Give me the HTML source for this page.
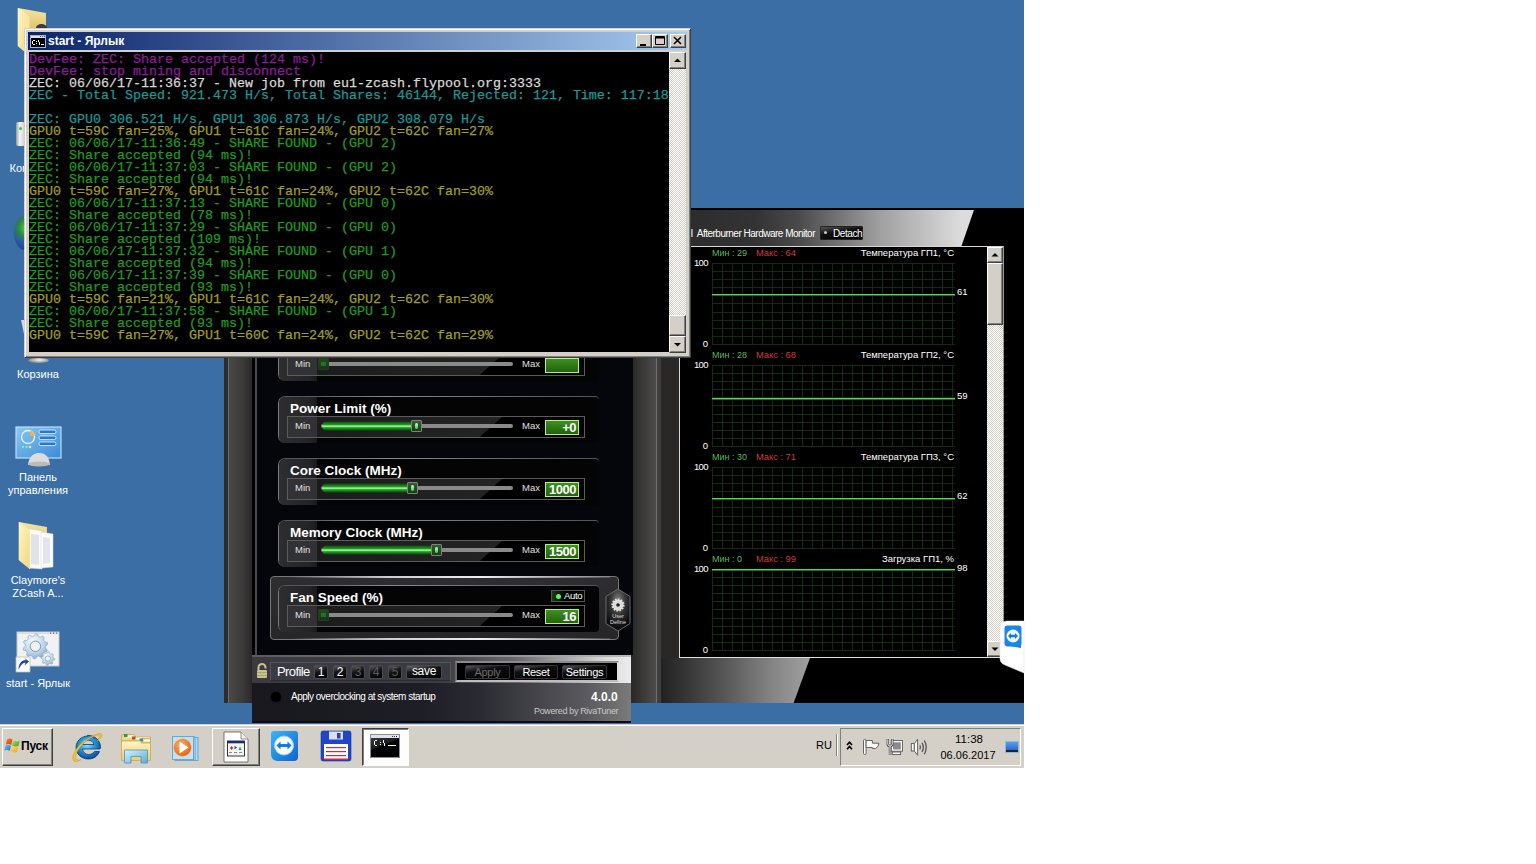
<!DOCTYPE html><html><head><meta charset="utf-8"><style>
*{margin:0;padding:0;box-sizing:border-box}
html,body{width:1536px;height:864px;overflow:hidden;background:#fff}
body{position:relative;font-family:"Liberation Sans",sans-serif}
.abs{position:absolute}
.t{white-space:nowrap}
svg{position:absolute;overflow:visible}
#desk{position:absolute;left:0;top:0;width:1024px;height:724px;background:#3a6ea5;overflow:hidden}
.lbl{position:absolute;color:#fff;font-size:11px;line-height:13px;text-align:center;width:76px}
.con{position:absolute;left:29px;top:52px;width:640px;height:300px;background:#000;overflow:hidden}
.con pre{font-family:"Liberation Mono",monospace;font-size:13.33px;line-height:12px;font-weight:normal;white-space:pre;-webkit-text-stroke:0.25px currentColor;position:absolute;left:0;top:2px}
.m{color:#8c1c9c}.w{color:#d8d8d8}.c{color:#1c9898}.y{color:#a09c28}.g{color:#209a20}
.raised{border:1px solid;border-color:#fff #404040 #404040 #fff;box-shadow:inset -1px -1px #808080,inset 1px 1px #d4d0c8;background:#d4d0c8}
.chk{background:repeating-conic-gradient(#fff 0 25%,#d4d0c8 0 50%) 0 0/2px 2px}
</style></head><body>
<div id="desk"></div>
<svg width="34" height="48" style="left:18px;top:8px">
<defs><linearGradient id="fy1" x1="0" y1="0" x2="1" y2="1"><stop offset="0" stop-color="#fff6c4"/><stop offset="1" stop-color="#f2d680"/></linearGradient>
<linearGradient id="fb1" x1="0" y1="0" x2="0" y2="1"><stop offset="0" stop-color="#f6e4a0"/><stop offset="1" stop-color="#dcbc60"/></linearGradient></defs>
<path d="M0 0 L28 5 L28 26 L0 26Z" fill="url(#fb1)"/>

<path d="M0 0 L11 9 L11 47 L0 38Z" fill="url(#fy1)" stroke="#fff6cc" stroke-width="0.6"/></svg>
<div class="abs" style="left:36px;top:24px;width:11px;height:8px;border-radius:50%;background:#3a3a3a"></div>
<div class="abs" style="left:16px;top:122px;width:9px;height:24px;background:linear-gradient(90deg,#999,#f4f4f4 40%,#ccc);border-radius:2px"></div>
<div class="abs" style="left:19px;top:127px;width:3px;height:3px;background:#3c3;border-radius:50%"></div>
<div class="abs" style="left:14px;top:216px;width:22px;height:34px;border-radius:50%;background:radial-gradient(circle at 60% 35%,#5fd05f,#2a8a3a 35%,#2a5aa8 60%,#1a3a80)"></div>
<div class="abs" style="left:21px;top:320px;width:6px;height:14px;background:linear-gradient(90deg,#c8ccd8,#eef0f4);clip-path:polygon(0 0,100% 0,100% 100%,50% 100%)"></div>
<div class="abs" style="left:28px;top:358px;width:21px;height:5px;border-radius:50%;background:radial-gradient(ellipse at 55% 40%,#f4f4f4,#9a9a9a 60%,#555)"></div>
<svg width="48" height="42" style="left:15px;top:425px"><defs><linearGradient id="cpg" x1="0" y1="0" x2="1" y2="1"><stop offset="0" stop-color="#8cc8f0"/><stop offset="1" stop-color="#3a8ad8"/></linearGradient></defs>
<rect x="1" y="2" width="45" height="31" fill="url(#cpg)" stroke="#b8e0ff" stroke-width="1.2"/>
<circle cx="13" cy="12" r="6.5" fill="none" stroke="#e8f6ff" stroke-width="1.3"/><path d="M15 5.5 A6.5 6.5 0 0 1 19.5 11 L15 11Z" fill="#f7b040"/>
<rect x="24" y="5" width="17" height="3.6" rx="1.8" fill="#2a78c8" stroke="#e8f6ff" stroke-width="0.8"/>
<rect x="24" y="11" width="17" height="3.6" rx="1.8" fill="#2a78c8" stroke="#e8f6ff" stroke-width="0.8"/>
<rect x="24" y="17" width="17" height="3.6" rx="1.8" fill="#2a78c8" stroke="#e8f6ff" stroke-width="0.8"/>
<circle cx="8" cy="22" r="1.2" fill="#6ef"/><circle cx="11.5" cy="22" r="1.2" fill="#6ef"/><circle cx="15" cy="22" r="1.3" fill="#fd6"/>
<path d="M13 40 C14 30 20 28 24 28 C30 28 34 31 35 40 Z" fill="#ddd"/><ellipse cx="24" cy="39" rx="11" ry="2.6" fill="#bbb"/></svg>
<svg width="34" height="48" style="left:19px;top:522px">
<defs><linearGradient id="fy2" x1="0" y1="0" x2="1" y2="1"><stop offset="0" stop-color="#fff6c4"/><stop offset="1" stop-color="#f2d680"/></linearGradient>
<linearGradient id="fb2" x1="0" y1="0" x2="0" y2="1"><stop offset="0" stop-color="#f6e4a0"/><stop offset="1" stop-color="#dcbc60"/></linearGradient></defs>
<path d="M0 0 L28 5 L28 26 L0 26Z" fill="url(#fb2)"/>
<path d="M10 7 L23 9 L23 47 L10 46Z" fill="#fafafa" stroke="#ddd" stroke-width="0.5"/><path d="M12 12 L20 13 L20 43 L12 42Z" fill="#e2e2ea"/><path d="M22 10 L34 12 L34 45 L22 46Z" fill="#fdfdfd" stroke="#ddd" stroke-width="0.5"/><path d="M24 15 L31 16 L31 41 L24 42Z" fill="#e4e4ec"/>
<path d="M0 0 L11 9 L11 47 L0 38Z" fill="url(#fy2)" stroke="#fff6cc" stroke-width="0.6"/></svg>
<svg width="46" height="42" style="left:16px;top:631px"><defs><radialGradient id="gear" cx="0.4" cy="0.3" r="0.8"><stop offset="0" stop-color="#f4fbff"/><stop offset="0.6" stop-color="#b8d4ec"/><stop offset="1" stop-color="#7f9fbf"/></radialGradient></defs>
<rect x="1" y="1" width="42" height="34" fill="#f2f2f2" stroke="#c8c8c8"/><rect x="1" y="1" width="42" height="2" fill="#ddd"/><rect x="34" y="1.5" width="1.2" height="1.2" fill="#666"/><rect x="37" y="1.5" width="1.2" height="1.2" fill="#666"/><rect x="40" y="1.5" width="1.2" height="1.2" fill="#666"/>
<path d="M19.4 2.8 L21.4 3.0 L22.6 5.6 L24.0 6.2 L26.7 5.2 L28.2 6.5 L27.7 9.3 L28.5 10.7 L31.3 11.4 L31.7 13.3 L29.6 15.3 L29.5 16.9 L31.3 19.2 L30.5 21.0 L27.7 21.3 L26.6 22.5 L26.7 25.4 L25.1 26.4 L22.6 25.0 L21.0 25.4 L19.4 27.8 L17.4 27.6 L16.2 25.0 L14.8 24.4 L12.1 25.4 L10.6 24.1 L11.1 21.3 L10.3 19.9 L7.5 19.2 L7.1 17.3 L9.2 15.3 L9.3 13.7 L7.5 11.4 L8.3 9.6 L11.1 9.3 L12.2 8.1 L12.1 5.2 L13.7 4.2 L16.2 5.6 L17.8 5.2Z" fill="url(#gear)" stroke="#8aa0b8" stroke-width="0.6"/><circle cx="19.4" cy="15.3" r="5.2" fill="#f2f2f2" stroke="#7a8a9a" stroke-width="0.9"/>
<path d="M31.9 20.7 L33.2 20.8 L33.9 22.6 L34.8 23.1 L36.7 22.7 L37.6 23.7 L36.8 25.5 L37.1 26.5 L38.7 27.5 L38.6 28.8 L36.8 29.5 L36.3 30.4 L36.7 32.3 L35.7 33.2 L33.9 32.4 L32.9 32.7 L31.9 34.3 L30.6 34.2 L29.9 32.4 L29.0 31.9 L27.1 32.3 L26.2 31.3 L27.0 29.5 L26.7 28.5 L25.1 27.5 L25.2 26.2 L27.0 25.5 L27.5 24.6 L27.1 22.7 L28.1 21.8 L29.9 22.6 L30.9 22.3Z" fill="url(#gear)" stroke="#8aa0b8" stroke-width="0.5"/><circle cx="31.9" cy="27.5" r="2.6" fill="#f2f2f2" stroke="#7a8a9a" stroke-width="0.6"/>
<rect x="0" y="26" width="14" height="15" fill="#fff" stroke="#bbb" stroke-width="0.8"/><path d="M2.5 39 C2.5 32 6 29 10 29 L8.5 27 L13 30.5 L8.5 34.5 L9.5 31.8 C6.5 31.8 4.5 34.5 2.5 39Z" fill="#1a4aa0"/></svg>
<div class="lbl" style="left:0;top:162px">Компьютер</div>
<div class="lbl" style="left:0;top:368px">Корзина</div>
<div class="lbl" style="left:0;top:471px">Панель<br>управления</div>
<div class="lbl" style="left:0;top:574px">Claymore's<br>ZCash A...</div>
<div class="lbl" style="left:0;top:677px">start - Ярлык</div>
<div class="abs" style="left:224px;top:250px;width:437px;height:453px;background:#2a2a2a"></div>
<div class="abs" style="left:224px;top:250px;width:4px;height:453px;background:#2e2d2d"></div>
<div class="abs" style="left:228px;top:250px;width:2px;height:453px;background:#6a6868"></div>
<div class="abs" style="left:229px;top:250px;width:23px;height:453px;background:linear-gradient(90deg,#4a4848,#3c3a38 60%,#2a2928)"></div>
<div class="abs" style="left:633px;top:250px;width:24px;height:453px;background:linear-gradient(90deg,#2a2a2a,#383735 35%,#4f4d4f)"></div>
<div class="abs" style="left:656px;top:250px;width:1px;height:453px;background:#707070"></div>
<div class="abs" style="left:657px;top:250px;width:4px;height:453px;background:#3f3d3f"></div>
<div class="abs" style="left:252px;top:250px;width:381px;height:405px;background:#05050c"></div>
<div class="abs" style="left:252px;top:250px;width:3px;height:405px;background:#000"></div>
<div class="abs" style="left:255px;top:250px;width:2px;height:405px;background:#4a4a4e"></div>
<div class="abs" style="left:278px;top:334px;width:321px;height:47px;border-radius:7px 4px 4px 7px;background:#040404;border-left:1px solid #7a7a7a;border-top:1px solid #555"></div>
<div class="abs" style="left:279px;top:335px;width:38px;height:46px;border-radius:6px 0 0 6px;background:linear-gradient(90deg,#2e2e30,#242426 80%,#1a1a1c)"></div>
<div class="abs" style="left:300px;top:334px;width:290px;height:1px;background:linear-gradient(90deg,rgba(120,120,120,0),#8a8a8a 30%,#6a6a6a 70%,rgba(90,90,90,0))"></div>
<div class="abs t" style="left:290px;top:338px;font-size:13.5px;font-weight:bold;color:#fff;line-height:17px">Core Voltage (mV)</div>
<div class="abs" style="left:287px;top:354px;width:298px;height:22px;border:1px solid #5c5c5c;background:#000;overflow:hidden"><div class="abs" style="left:0;top:0;width:29px;height:20px;background:#323234"></div><div class="abs" style="left:29px;top:0;width:185px;height:20px;background:linear-gradient(90deg,#1c1c1c,#242424);clip-path:polygon(0 0,100% 0,88% 100%,0 100%)"></div></div>
<div class="abs t" style="left:295px;top:358px;font-size:9.5px;color:#e0e0e0;line-height:12px">Min</div>
<div class="abs t" style="left:522px;top:358px;font-size:9.5px;color:#e0e0e0;line-height:12px">Max</div>
<div class="abs" style="left:321px;top:362px;width:192px;height:4px;border-radius:2px;background:#8a8a8a"></div>
<div class="abs" style="left:318px;top:358px;width:11px;height:12px;background:linear-gradient(#1e4a1e,#123a12);border:1px solid #2a3a2a;border-radius:1px"><div class="abs" style="left:2px;top:3px;width:5px;height:4px;background:#3a7a3a;opacity:.7"></div></div>
<div class="abs" style="left:545px;top:358px;width:34px;height:15px;border:1px solid #b6f08a;background:linear-gradient(#3e9020,#23620e);color:#fff;font-weight:bold;font-size:13px;line-height:13px;text-align:right;padding-right:2px;letter-spacing:-0.5px"></div>
<div class="abs" style="left:278px;top:396px;width:321px;height:47px;border-radius:7px 4px 4px 7px;background:#040404;border-left:1px solid #7a7a7a;border-top:1px solid #555"></div>
<div class="abs" style="left:279px;top:397px;width:38px;height:46px;border-radius:6px 0 0 6px;background:linear-gradient(90deg,#2e2e30,#242426 80%,#1a1a1c)"></div>
<div class="abs" style="left:300px;top:396px;width:290px;height:1px;background:linear-gradient(90deg,rgba(120,120,120,0),#8a8a8a 30%,#6a6a6a 70%,rgba(90,90,90,0))"></div>
<div class="abs t" style="left:290px;top:400px;font-size:13.5px;font-weight:bold;color:#fff;line-height:17px">Power Limit (%)</div>
<div class="abs" style="left:287px;top:416px;width:298px;height:22px;border:1px solid #5c5c5c;background:#000;overflow:hidden"><div class="abs" style="left:0;top:0;width:29px;height:20px;background:#323234"></div><div class="abs" style="left:29px;top:0;width:185px;height:20px;background:linear-gradient(90deg,#1c1c1c,#242424);clip-path:polygon(0 0,100% 0,88% 100%,0 100%)"></div></div>
<div class="abs t" style="left:295px;top:420px;font-size:9.5px;color:#e0e0e0;line-height:12px">Min</div>
<div class="abs t" style="left:522px;top:420px;font-size:9.5px;color:#e0e0e0;line-height:12px">Max</div>
<div class="abs" style="left:321px;top:424px;width:192px;height:4px;border-radius:2px;background:#8a8a8a"></div>
<div class="abs" style="left:322px;top:421px;width:93px;height:10px;border-radius:5px;background:linear-gradient(rgba(20,90,20,0),#157015 20%,#22a022 38%,#8af08a 48%,#b8ffb0 52%,#30b030 64%,#127012 82%,rgba(20,90,20,0))"></div>
<div class="abs" style="left:411px;top:420px;width:11px;height:12px;background:linear-gradient(#3a5a3a,#1a3a1a);border:1px solid #7a847a;border-radius:1px"><div class="abs" style="left:3px;top:2px;width:3px;height:6px;border-radius:2px;background:linear-gradient(#cfc,#3c3)"></div></div>
<div class="abs" style="left:545px;top:420px;width:34px;height:15px;border:1px solid #b6f08a;background:linear-gradient(#3e9020,#23620e);color:#fff;font-weight:bold;font-size:13px;line-height:13px;text-align:right;padding-right:2px;letter-spacing:-0.5px">+0</div>
<div class="abs" style="left:278px;top:458px;width:321px;height:47px;border-radius:7px 4px 4px 7px;background:#040404;border-left:1px solid #7a7a7a;border-top:1px solid #555"></div>
<div class="abs" style="left:279px;top:459px;width:38px;height:46px;border-radius:6px 0 0 6px;background:linear-gradient(90deg,#2e2e30,#242426 80%,#1a1a1c)"></div>
<div class="abs" style="left:300px;top:458px;width:290px;height:1px;background:linear-gradient(90deg,rgba(120,120,120,0),#8a8a8a 30%,#6a6a6a 70%,rgba(90,90,90,0))"></div>
<div class="abs t" style="left:290px;top:462px;font-size:13.5px;font-weight:bold;color:#fff;line-height:17px">Core Clock (MHz)</div>
<div class="abs" style="left:287px;top:478px;width:298px;height:22px;border:1px solid #5c5c5c;background:#000;overflow:hidden"><div class="abs" style="left:0;top:0;width:29px;height:20px;background:#323234"></div><div class="abs" style="left:29px;top:0;width:185px;height:20px;background:linear-gradient(90deg,#1c1c1c,#242424);clip-path:polygon(0 0,100% 0,88% 100%,0 100%)"></div></div>
<div class="abs t" style="left:295px;top:482px;font-size:9.5px;color:#e0e0e0;line-height:12px">Min</div>
<div class="abs t" style="left:522px;top:482px;font-size:9.5px;color:#e0e0e0;line-height:12px">Max</div>
<div class="abs" style="left:321px;top:486px;width:192px;height:4px;border-radius:2px;background:#8a8a8a"></div>
<div class="abs" style="left:322px;top:483px;width:89px;height:10px;border-radius:5px;background:linear-gradient(rgba(20,90,20,0),#157015 20%,#22a022 38%,#8af08a 48%,#b8ffb0 52%,#30b030 64%,#127012 82%,rgba(20,90,20,0))"></div>
<div class="abs" style="left:407px;top:482px;width:11px;height:12px;background:linear-gradient(#3a5a3a,#1a3a1a);border:1px solid #7a847a;border-radius:1px"><div class="abs" style="left:3px;top:2px;width:3px;height:6px;border-radius:2px;background:linear-gradient(#cfc,#3c3)"></div></div>
<div class="abs" style="left:545px;top:482px;width:34px;height:15px;border:1px solid #b6f08a;background:linear-gradient(#3e9020,#23620e);color:#fff;font-weight:bold;font-size:13px;line-height:13px;text-align:right;padding-right:2px;letter-spacing:-0.5px">1000</div>
<div class="abs" style="left:278px;top:520px;width:321px;height:47px;border-radius:7px 4px 4px 7px;background:#040404;border-left:1px solid #7a7a7a;border-top:1px solid #555"></div>
<div class="abs" style="left:279px;top:521px;width:38px;height:46px;border-radius:6px 0 0 6px;background:linear-gradient(90deg,#2e2e30,#242426 80%,#1a1a1c)"></div>
<div class="abs" style="left:300px;top:520px;width:290px;height:1px;background:linear-gradient(90deg,rgba(120,120,120,0),#8a8a8a 30%,#6a6a6a 70%,rgba(90,90,90,0))"></div>
<div class="abs t" style="left:290px;top:524px;font-size:13.5px;font-weight:bold;color:#fff;line-height:17px">Memory Clock (MHz)</div>
<div class="abs" style="left:287px;top:540px;width:298px;height:22px;border:1px solid #5c5c5c;background:#000;overflow:hidden"><div class="abs" style="left:0;top:0;width:29px;height:20px;background:#323234"></div><div class="abs" style="left:29px;top:0;width:185px;height:20px;background:linear-gradient(90deg,#1c1c1c,#242424);clip-path:polygon(0 0,100% 0,88% 100%,0 100%)"></div></div>
<div class="abs t" style="left:295px;top:544px;font-size:9.5px;color:#e0e0e0;line-height:12px">Min</div>
<div class="abs t" style="left:522px;top:544px;font-size:9.5px;color:#e0e0e0;line-height:12px">Max</div>
<div class="abs" style="left:321px;top:548px;width:192px;height:4px;border-radius:2px;background:#8a8a8a"></div>
<div class="abs" style="left:322px;top:545px;width:113px;height:10px;border-radius:5px;background:linear-gradient(rgba(20,90,20,0),#157015 20%,#22a022 38%,#8af08a 48%,#b8ffb0 52%,#30b030 64%,#127012 82%,rgba(20,90,20,0))"></div>
<div class="abs" style="left:431px;top:544px;width:11px;height:12px;background:linear-gradient(#3a5a3a,#1a3a1a);border:1px solid #7a847a;border-radius:1px"><div class="abs" style="left:3px;top:2px;width:3px;height:6px;border-radius:2px;background:linear-gradient(#cfc,#3c3)"></div></div>
<div class="abs" style="left:545px;top:544px;width:34px;height:15px;border:1px solid #b6f08a;background:linear-gradient(#3e9020,#23620e);color:#fff;font-weight:bold;font-size:13px;line-height:13px;text-align:right;padding-right:2px;letter-spacing:-0.5px">1500</div>
<div class="abs" style="left:270px;top:576px;width:349px;height:64px;border-radius:4px;border:1px solid #777;background:linear-gradient(#2e2e30,#262628)"></div>
<div class="abs" style="left:290px;top:576px;width:320px;height:2px;background:linear-gradient(90deg,rgba(200,200,200,0),#ccc 30%,#eee 60%,rgba(200,200,200,.2))"></div>
<div class="abs" style="left:290px;top:638px;width:320px;height:2px;background:linear-gradient(90deg,rgba(200,200,200,0),#ccc 30%,#eee 60%,rgba(200,200,200,.2))"></div>
<div class="abs" style="left:278px;top:585px;width:321px;height:47px;border-radius:7px 4px 4px 7px;background:#040404;border-left:1px solid #7a7a7a;border-top:1px solid #555"></div>
<div class="abs" style="left:279px;top:586px;width:38px;height:46px;border-radius:6px 0 0 6px;background:linear-gradient(90deg,#2e2e30,#242426 80%,#1a1a1c)"></div>
<div class="abs" style="left:300px;top:585px;width:290px;height:1px;background:linear-gradient(90deg,rgba(120,120,120,0),#8a8a8a 30%,#6a6a6a 70%,rgba(90,90,90,0))"></div>
<div class="abs t" style="left:290px;top:589px;font-size:13.5px;font-weight:bold;color:#fff;line-height:17px">Fan Speed (%)</div>
<div class="abs" style="left:287px;top:605px;width:298px;height:22px;border:1px solid #5c5c5c;background:#000;overflow:hidden"><div class="abs" style="left:0;top:0;width:29px;height:20px;background:#323234"></div><div class="abs" style="left:29px;top:0;width:185px;height:20px;background:linear-gradient(90deg,#1c1c1c,#242424);clip-path:polygon(0 0,100% 0,88% 100%,0 100%)"></div></div>
<div class="abs t" style="left:295px;top:609px;font-size:9.5px;color:#e0e0e0;line-height:12px">Min</div>
<div class="abs t" style="left:522px;top:609px;font-size:9.5px;color:#e0e0e0;line-height:12px">Max</div>
<div class="abs" style="left:321px;top:613px;width:192px;height:4px;border-radius:2px;background:#8a8a8a"></div>
<div class="abs" style="left:318px;top:609px;width:11px;height:12px;background:linear-gradient(#1e4a1e,#123a12);border:1px solid #2a3a2a;border-radius:1px"><div class="abs" style="left:2px;top:3px;width:5px;height:4px;background:#3a7a3a;opacity:.7"></div></div>
<div class="abs" style="left:545px;top:609px;width:34px;height:15px;border:1px solid #b6f08a;background:linear-gradient(#3e9020,#23620e);color:#fff;font-weight:bold;font-size:13px;line-height:13px;text-align:right;padding-right:2px;letter-spacing:-0.5px">16</div>
<div class="abs" style="left:551px;top:590px;width:34px;height:12px;border:1px solid #555;background:linear-gradient(90deg,#1a3a1a,#000 40%);color:#fff;font-size:9.5px;line-height:10px;padding-left:12px;letter-spacing:-0.3px">Auto</div>
<div class="abs" style="left:556px;top:594px;width:5px;height:5px;border-radius:50%;background:#5f5"></div>
<svg width="26" height="45" style="left:605px;top:588px"><defs><radialGradient id="hx" cx="0.5" cy="0.3" r="0.65"><stop offset="0" stop-color="#8a8a8a"/><stop offset="0.5" stop-color="#333"/><stop offset="1" stop-color="#0a0a0a"/></radialGradient></defs>
<path d="M13 1 L25 8.5 V35.5 L13 43 L1 35.5 V8.5Z" fill="url(#hx)" stroke="#6a6a6a" stroke-width="1"/>
<circle cx="13" cy="17" r="5.5" fill="#ddd" stroke="#e8e8e8" stroke-width="2.2" stroke-dasharray="1.5 1.3"/><circle cx="13" cy="17" r="1.8" fill="#222"/>
<text x="13" y="30" font-size="5.5" fill="#ddd" text-anchor="middle" font-family="Liberation Sans">User</text><text x="13" y="35.5" font-size="5.5" fill="#ddd" text-anchor="middle" font-family="Liberation Sans">Define</text></svg>
<div class="abs" style="left:252px;top:655px;width:379px;height:68px;background:#1c1c22"></div>
<div class="abs" style="left:252px;top:655px;width:379px;height:2px;background:linear-gradient(90deg,#5a5a5a,#888 60%,#bbb)"></div>
<div class="abs" style="left:252px;top:657px;width:379px;height:27px;background:linear-gradient(90deg,#3a3a40,#3c3c42 50%,#6a6a6e 70%,#d8d8d8 93%,#ececec)"></div>
<div class="abs" style="left:252px;top:683px;width:379px;height:40px;background:linear-gradient(90deg,#18181e,#1e1e26 45%,#2a2a32 60%,#5a5a5e 88%,#7a7a7a)"></div>
<div class="abs" style="left:252px;top:721px;width:379px;height:2px;background:#0a0a10"></div>
<svg width="12" height="16" style="left:256px;top:663px"><path d="M2.5 7 V4.5 A3.5 3.5 0 0 1 9.5 4.5 V5.5" fill="none" stroke="#c8c490" stroke-width="2"/><rect x="1" y="7" width="10" height="8" rx="1" fill="#c8c490"/><rect x="1" y="9" width="10" height="1" fill="#a8a470"/><rect x="1" y="12" width="10" height="1" fill="#a8a470"/></svg>
<div class="abs" style="left:270px;top:662px;width:181px;height:19px;background:#3a3a42;border:1px solid #55555c;border-bottom-color:#2a2a30"></div>
<div class="abs t" style="left:277px;top:664px;font-size:13px;color:#fff;line-height:16px;letter-spacing:-0.6px">Profile</div>
<div class="abs" style="left:314px;top:665px;width:14px;height:14px;background:linear-gradient(160deg,#5a5a5a,#151515 45%,#000);border:1px solid #4a4a4e;border-radius:2px;color:#fff;font-size:12px;line-height:13px;text-align:center">1</div>
<div class="abs" style="left:333px;top:665px;width:14px;height:14px;background:linear-gradient(160deg,#5a5a5a,#151515 45%,#000);border:1px solid #4a4a4e;border-radius:2px;color:#fff;font-size:12px;line-height:13px;text-align:center">2</div>
<div class="abs" style="left:351px;top:665px;width:14px;height:14px;background:linear-gradient(160deg,#5a5a5a,#151515 45%,#000);border:1px solid #4a4a4e;border-radius:2px;color:#5a5a5a;font-size:12px;line-height:13px;text-align:center">3</div>
<div class="abs" style="left:369px;top:665px;width:14px;height:14px;background:linear-gradient(160deg,#5a5a5a,#151515 45%,#000);border:1px solid #4a4a4e;border-radius:2px;color:#5a5a5a;font-size:12px;line-height:13px;text-align:center">4</div>
<div class="abs" style="left:388px;top:665px;width:14px;height:14px;background:linear-gradient(160deg,#5a5a5a,#151515 45%,#000);border:1px solid #4a4a4e;border-radius:2px;color:#5a5a5a;font-size:12px;line-height:13px;text-align:center">5</div>
<div class="abs" style="left:406px;top:665px;width:36px;height:14px;background:linear-gradient(170deg,#6a6a6a,#151515 40%,#000);border:1px solid #4a4a4e;border-radius:2px;color:#fff;font-size:12px;line-height:11px;text-align:center;letter-spacing:-0.3px">save</div>
<div class="abs" style="left:455px;top:661px;width:164px;height:21px;background:#000;border:2px solid;border-color:#8a8a8a #e0e0e0 #bdbdbd #6a6a6a"></div>
<div class="abs" style="left:465px;top:665px;width:45px;height:14px;background:linear-gradient(170deg,#5a5a5a,#101010 35%,#000);border:1px solid #333;border-radius:2px;color:#6a6a6a;font-size:11px;line-height:12px;text-align:center;letter-spacing:-0.3px">Apply</div>
<div class="abs" style="left:514px;top:665px;width:44px;height:14px;background:linear-gradient(170deg,#5a5a5a,#101010 35%,#000);border:1px solid #333;border-radius:2px;color:#fff;font-size:11px;line-height:12px;text-align:center;letter-spacing:-0.3px">Reset</div>
<div class="abs" style="left:562px;top:665px;width:45px;height:14px;background:linear-gradient(170deg,#5a5a5a,#101010 35%,#000);border:1px solid #333;border-radius:2px;color:#fff;font-size:11px;line-height:12px;text-align:center;letter-spacing:-0.3px">Settings</div>
<div class="abs" style="left:271px;top:692px;width:10px;height:10px;border-radius:50%;background:#000;box-shadow:0 0 2px #000"></div>
<div class="abs t" style="left:291px;top:691px;font-size:10px;color:#fff;line-height:12px;letter-spacing:-0.5px">Apply overclocking at system startup</div>
<div class="abs t" style="left:591px;top:690px;font-size:12px;font-weight:bold;color:#fff;line-height:14px;letter-spacing:0px">4.0.0</div>
<div class="abs t" style="left:534px;top:705px;font-size:9px;color:#c8c8c8;line-height:12px;letter-spacing:-0.35px">Powered by RivaTuner</div>
<div class="abs" style="left:661px;top:208px;width:363px;height:495px;background:#000"></div>
<div class="abs" style="left:661px;top:208px;width:18px;height:495px;background:#2a2826"></div>
<div class="abs" style="left:661px;top:210px;width:313px;height:36px;background:linear-gradient(90deg,#2a2a2a,#333 30%,#4a4a4a 44%,#a0a0a0 70%,#dcdcdc 96%);clip-path:polygon(0 0,100% 0,96% 100%,0 100%)"></div>
<div class="abs" style="left:661px;top:658px;width:149px;height:45px;background:linear-gradient(90deg,#222,#333 15%,#5a5a5a 45%,#858585 75%,#a0a0a0);clip-path:polygon(0 0,100% 0,89% 100%,0 100%)"></div>
<div class="abs t" style="left:615px;top:227px;width:200px;font-size:10px;color:#fff;line-height:13px;letter-spacing:-0.5px;text-align:right">I&nbsp; Afterburner Hardware Monitor</div>
<div class="abs" style="left:820px;top:226px;width:43px;height:14px;background:linear-gradient(170deg,#555,#111 40%,#000);border:1px solid #222;border-radius:1px;color:#fff;font-size:10px;line-height:13px;padding-left:12px;letter-spacing:-0.4px">Detach</div>
<div class="abs" style="left:824px;top:231px;width:3px;height:3px;background:#ccc;border-radius:50%"></div>
<div class="abs" style="left:679px;top:246px;width:325px;height:412px;border:1px solid #d8d8d8;border-right-color:#9a9a9a;border-bottom-color:#e0e0e0;background:#000"></div>
<div class="abs t" style="left:712px;top:247px;font-size:9px;line-height:12px;color:#5ab85a">Мин : 29</div>
<div class="abs t" style="left:756px;top:247px;font-size:9.3px;line-height:12px;color:#d23a3a">Макс : 64</div>
<div class="abs t" style="left:754px;top:247px;width:200px;font-size:9.5px;line-height:12px;color:#fff;text-align:right">Температура ГП1, °C</div>
<div class="abs t" style="left:680px;top:257px;width:28px;font-size:9.5px;line-height:12px;color:#fff;text-align:right;letter-spacing:-0.6px">100</div>
<div class="abs t" style="left:680px;top:338px;width:28px;font-size:9.5px;line-height:12px;color:#fff;text-align:right">0</div>
<div class="abs" style="left:712px;top:263px;width:243px;height:83px;"><svg width="244" height="83" style="left:0;top:0"><path d="M0.5 0V81 M10.5 0V81 M20.5 0V81 M30.5 0V81 M40.5 0V81 M50.5 0V81 M60.5 0V81 M70.5 0V81 M80.5 0V81 M90.5 0V81 M100.5 0V81 M110.5 0V81 M120.5 0V81 M130.5 0V81 M140.5 0V81 M150.5 0V81 M160.5 0V81 M170.5 0V81 M180.5 0V81 M190.5 0V81 M200.5 0V81 M210.5 0V81 M220.5 0V81 M230.5 0V81 M240.5 0V81 M0 0.5H243 M0 8.5H243 M0 16.5H243 M0 24.5H243 M0 32.5H243 M0 40.5H243 M0 49.5H243 M0 57.5H243 M0 65.5H243 M0 73.5H243 M0 81.5H243" stroke="#0e2e0e" stroke-width="1" fill="none"/></svg></div>
<div class="abs" style="left:712px;top:294px;width:243px;height:1px;background:#58d858"></div>
<div class="abs" style="left:712px;top:295px;width:243px;height:1px;background:#1e6a1e"></div>
<div class="abs t" style="left:957px;top:286px;font-size:9.5px;line-height:12px;color:#fff">61</div>
<div class="abs t" style="left:712px;top:349px;font-size:9px;line-height:12px;color:#5ab85a">Мин : 28</div>
<div class="abs t" style="left:756px;top:349px;font-size:9.3px;line-height:12px;color:#d23a3a">Макс : 68</div>
<div class="abs t" style="left:754px;top:349px;width:200px;font-size:9.5px;line-height:12px;color:#fff;text-align:right">Температура ГП2, °C</div>
<div class="abs t" style="left:680px;top:359px;width:28px;font-size:9.5px;line-height:12px;color:#fff;text-align:right;letter-spacing:-0.6px">100</div>
<div class="abs t" style="left:680px;top:440px;width:28px;font-size:9.5px;line-height:12px;color:#fff;text-align:right">0</div>
<div class="abs" style="left:712px;top:365px;width:243px;height:83px;"><svg width="244" height="83" style="left:0;top:0"><path d="M0.5 0V81 M10.5 0V81 M20.5 0V81 M30.5 0V81 M40.5 0V81 M50.5 0V81 M60.5 0V81 M70.5 0V81 M80.5 0V81 M90.5 0V81 M100.5 0V81 M110.5 0V81 M120.5 0V81 M130.5 0V81 M140.5 0V81 M150.5 0V81 M160.5 0V81 M170.5 0V81 M180.5 0V81 M190.5 0V81 M200.5 0V81 M210.5 0V81 M220.5 0V81 M230.5 0V81 M240.5 0V81 M0 0.5H243 M0 8.5H243 M0 16.5H243 M0 24.5H243 M0 32.5H243 M0 40.5H243 M0 49.5H243 M0 57.5H243 M0 65.5H243 M0 73.5H243 M0 81.5H243" stroke="#0e2e0e" stroke-width="1" fill="none"/></svg></div>
<div class="abs" style="left:712px;top:398px;width:243px;height:1px;background:#58d858"></div>
<div class="abs" style="left:712px;top:399px;width:243px;height:1px;background:#1e6a1e"></div>
<div class="abs t" style="left:957px;top:390px;font-size:9.5px;line-height:12px;color:#fff">59</div>
<div class="abs t" style="left:712px;top:451px;font-size:9px;line-height:12px;color:#5ab85a">Мин : 30</div>
<div class="abs t" style="left:756px;top:451px;font-size:9.3px;line-height:12px;color:#d23a3a">Макс : 71</div>
<div class="abs t" style="left:754px;top:451px;width:200px;font-size:9.5px;line-height:12px;color:#fff;text-align:right">Температура ГП3, °C</div>
<div class="abs t" style="left:680px;top:461px;width:28px;font-size:9.5px;line-height:12px;color:#fff;text-align:right;letter-spacing:-0.6px">100</div>
<div class="abs t" style="left:680px;top:542px;width:28px;font-size:9.5px;line-height:12px;color:#fff;text-align:right">0</div>
<div class="abs" style="left:712px;top:467px;width:243px;height:83px;"><svg width="244" height="83" style="left:0;top:0"><path d="M0.5 0V81 M10.5 0V81 M20.5 0V81 M30.5 0V81 M40.5 0V81 M50.5 0V81 M60.5 0V81 M70.5 0V81 M80.5 0V81 M90.5 0V81 M100.5 0V81 M110.5 0V81 M120.5 0V81 M130.5 0V81 M140.5 0V81 M150.5 0V81 M160.5 0V81 M170.5 0V81 M180.5 0V81 M190.5 0V81 M200.5 0V81 M210.5 0V81 M220.5 0V81 M230.5 0V81 M240.5 0V81 M0 0.5H243 M0 8.5H243 M0 16.5H243 M0 24.5H243 M0 32.5H243 M0 40.5H243 M0 49.5H243 M0 57.5H243 M0 65.5H243 M0 73.5H243 M0 81.5H243" stroke="#0e2e0e" stroke-width="1" fill="none"/></svg></div>
<div class="abs" style="left:712px;top:498px;width:243px;height:1px;background:#58d858"></div>
<div class="abs" style="left:712px;top:499px;width:243px;height:1px;background:#1e6a1e"></div>
<div class="abs t" style="left:957px;top:490px;font-size:9.5px;line-height:12px;color:#fff">62</div>
<div class="abs t" style="left:712px;top:553px;font-size:9px;line-height:12px;color:#5ab85a">Мин : 0</div>
<div class="abs t" style="left:756px;top:553px;font-size:9.3px;line-height:12px;color:#d23a3a">Макс : 99</div>
<div class="abs t" style="left:754px;top:553px;width:200px;font-size:9.5px;line-height:12px;color:#fff;text-align:right">Загрузка ГП1, %</div>
<div class="abs t" style="left:680px;top:563px;width:28px;font-size:9.5px;line-height:12px;color:#fff;text-align:right;letter-spacing:-0.6px">100</div>
<div class="abs t" style="left:680px;top:644px;width:28px;font-size:9.5px;line-height:12px;color:#fff;text-align:right">0</div>
<div class="abs" style="left:712px;top:569px;width:243px;height:83px;"><svg width="244" height="83" style="left:0;top:0"><path d="M0.5 0V81 M10.5 0V81 M20.5 0V81 M30.5 0V81 M40.5 0V81 M50.5 0V81 M60.5 0V81 M70.5 0V81 M80.5 0V81 M90.5 0V81 M100.5 0V81 M110.5 0V81 M120.5 0V81 M130.5 0V81 M140.5 0V81 M150.5 0V81 M160.5 0V81 M170.5 0V81 M180.5 0V81 M190.5 0V81 M200.5 0V81 M210.5 0V81 M220.5 0V81 M230.5 0V81 M240.5 0V81 M0 0.5H243 M0 8.5H243 M0 16.5H243 M0 24.5H243 M0 32.5H243 M0 40.5H243 M0 49.5H243 M0 57.5H243 M0 65.5H243 M0 73.5H243 M0 81.5H243" stroke="#0e2e0e" stroke-width="1" fill="none"/></svg></div>
<div class="abs" style="left:712px;top:569px;width:243px;height:1px;background:#58d858"></div>
<div class="abs" style="left:712px;top:570px;width:243px;height:1px;background:#1e6a1e"></div>
<div class="abs t" style="left:957px;top:562px;font-size:9.5px;line-height:12px;color:#fff">98</div>
<div class="abs chk" style="left:987px;top:247px;width:16px;height:410px;"></div>
<div class="abs raised" style="left:987px;top:247px;width:16px;height:16px;"><svg width="16" height="16" style="left:-1px;top:-1px"><path d="M4.5 9.5h7l-3.5-3.5z" fill="#000"/></svg></div>
<div class="abs raised" style="left:987px;top:263px;width:16px;height:62px;"></div>
<div class="abs raised" style="left:987px;top:641px;width:16px;height:16px;"><svg width="16" height="16" style="left:-1px;top:-1px"><path d="M4.5 6.5h7l-3.5 3.5z" fill="#000"/></svg></div>
<svg width="26" height="52" style="left:999px;top:621px"><path d="M25 0 H8 Q1 0 1 7 V38 Q1 42 6 44 L25 52Z" fill="#fff" stroke="#dde" stroke-width="0.5"/>
<path d="M6 5 L22 7 V27 L6 24Z" fill="#1a7ae0"/><rect x="5.5" y="4.5" width="17" height="21" rx="3" fill="#1a86e8"/><circle cx="14" cy="15" r="6.5" fill="#eef6ff"/><path d="M9 15 L12 12 V13.8 H16 V12 L19 15 L16 18 V16.2 H12 V18Z" fill="#1a7ad8"/></svg>
<div class="abs" style="left:24px;top:28px;width:667px;height:330px;background:#d4d0c8;border:1px solid;border-color:#d4d0c8 #404040 #404040 #d4d0c8;box-shadow:inset 1px 1px #fff,inset -1px -1px #808080"></div>
<div class="abs" style="left:28px;top:32px;width:659px;height:18px;background:linear-gradient(90deg,#0a246a,#a6caf0)"></div>
<svg width="16" height="13" style="left:30px;top:35px" shape-rendering="crispEdges"><rect x="0" y="0" width="16" height="13" fill="#a8b0cc"/><rect x="1" y="1" width="14" height="2" fill="#dde0ea"/><rect x="10" y="1" width="1" height="1" fill="#556"/><rect x="12" y="1" width="1" height="1" fill="#556"/><rect x="14" y="1" width="1" height="1" fill="#556"/><rect x="1" y="3" width="14" height="9" fill="#000"/>
<g fill="#fff"><rect x="3" y="5" width="2" height="1"/><rect x="2" y="6" width="1" height="3"/><rect x="3" y="9" width="2" height="1"/><rect x="6" y="6" width="1" height="1"/><rect x="6" y="8" width="1" height="1"/><rect x="8" y="5" width="1" height="2"/><rect x="9" y="7" width="1" height="3"/><rect x="11" y="9" width="3" height="1"/></g></svg>
<div class="abs t" style="left:48px;top:34px;font-size:12px;font-weight:bold;color:#fff;line-height:14px">start - Ярлык</div>
<div class="abs chk" style="left:669px;top:52px;width:17px;height:300px;"></div>
<div class="abs raised" style="left:669px;top:52px;width:17px;height:17px;"><svg width="17" height="17" style="left:-1px;top:-1px"><path d="M5 10h7l-3.5-3.5z" fill="#000"/></svg></div>
<div class="abs raised" style="left:669px;top:315px;width:17px;height:21px;"></div>
<div class="abs raised" style="left:669px;top:336px;width:17px;height:17px;"><svg width="17" height="17" style="left:-1px;top:-1px"><path d="M5 7h7l-3.5 3.5z" fill="#000"/></svg></div>
<div class="abs raised" style="left:636px;top:34px;width:16px;height:14px;"><svg width="16" height="14" style="left:-1px;top:-1px"><path d="M4 10h6v2H4z" fill="#000"/></svg></div>
<div class="abs raised" style="left:652px;top:34px;width:16px;height:14px;"><svg width="16" height="14" style="left:-1px;top:-1px"><path d="M3.5 2.5h9v8h-9z M3.5 3.5h9" fill="none" stroke="#000" stroke-width="1"/><path d="M3 3h10v1.5H3z" fill="#000"/></svg></div>
<div class="abs raised" style="left:670px;top:34px;width:16px;height:14px;"><svg width="16" height="14" style="left:-1px;top:-1px"><path d="M4 3l7 7M11 3l-7 7" stroke="#000" stroke-width="1.6"/></svg></div>
<div class="con"><pre><span class="m">DevFee: ZEC: Share accepted (124 ms)!</span>
<span class="m">DevFee: stop mining and disconnect</span>
<span class="w">ZEC: 06/06/17-11:36:37 - New job from eu1-zcash.flypool.org:3333</span>
<span class="c">ZEC - Total Speed: 921.473 H/s, Total Shares: 46144, Rejected: 121, Time: 117:18</span>
<span class="c"></span>
<span class="c">ZEC: GPU0 306.521 H/s, GPU1 306.873 H/s, GPU2 308.079 H/s</span>
<span class="y">GPU0 t=59C fan=25%, GPU1 t=61C fan=24%, GPU2 t=62C fan=27%</span>
<span class="g">ZEC: 06/06/17-11:36:49 - SHARE FOUND - (GPU 2)</span>
<span class="g">ZEC: Share accepted (94 ms)!</span>
<span class="g">ZEC: 06/06/17-11:37:03 - SHARE FOUND - (GPU 2)</span>
<span class="g">ZEC: Share accepted (94 ms)!</span>
<span class="y">GPU0 t=59C fan=27%, GPU1 t=61C fan=24%, GPU2 t=62C fan=30%</span>
<span class="g">ZEC: 06/06/17-11:37:13 - SHARE FOUND - (GPU 0)</span>
<span class="g">ZEC: Share accepted (78 ms)!</span>
<span class="g">ZEC: 06/06/17-11:37:29 - SHARE FOUND - (GPU 0)</span>
<span class="g">ZEC: Share accepted (109 ms)!</span>
<span class="g">ZEC: 06/06/17-11:37:32 - SHARE FOUND - (GPU 1)</span>
<span class="g">ZEC: Share accepted (94 ms)!</span>
<span class="g">ZEC: 06/06/17-11:37:39 - SHARE FOUND - (GPU 0)</span>
<span class="g">ZEC: Share accepted (93 ms)!</span>
<span class="y">GPU0 t=59C fan=21%, GPU1 t=61C fan=24%, GPU2 t=62C fan=30%</span>
<span class="g">ZEC: 06/06/17-11:37:58 - SHARE FOUND - (GPU 1)</span>
<span class="g">ZEC: Share accepted (93 ms)!</span>
<span class="y">GPU0 t=59C fan=27%, GPU1 t=60C fan=24%, GPU2 t=62C fan=29%</span></pre></div>
<div class="abs" style="left:0px;top:724px;width:1024px;height:44px;background:#d4d0c8;border-top:1px solid #d4d0c8;box-shadow:inset 0 1px #fff"></div>
<div class="abs raised" style="left:2px;top:728px;width:51px;height:38px;"></div>
<svg width="17" height="15" style="left:4px;top:738px"><defs>
<linearGradient id="wr" x1="0" y1="0" x2="1" y2="1"><stop offset="0" stop-color="#ff7a30"/><stop offset="1" stop-color="#e03a10"/></linearGradient>
<linearGradient id="wgn" x1="0" y1="0" x2="1" y2="1"><stop offset="0" stop-color="#b8e060"/><stop offset="1" stop-color="#3a9a20"/></linearGradient>
<linearGradient id="wb" x1="0" y1="0" x2="1" y2="1"><stop offset="0" stop-color="#70c0f0"/><stop offset="1" stop-color="#2a70c8"/></linearGradient>
<linearGradient id="wy" x1="0" y1="0" x2="1" y2="1"><stop offset="0" stop-color="#ffe060"/><stop offset="1" stop-color="#f0a010"/></linearGradient></defs>
<path d="M3 1.5 C5 0 7 0.5 8.5 1.8 L7.2 7 C5.5 5.8 3.8 5.6 1.8 6.6Z" fill="url(#wr)"/>
<path d="M9.3 2.2 C11 3.5 13 3.8 15.8 2.4 L14.5 7.8 C12 9 10.5 8.7 8 7.5Z" fill="url(#wgn)"/>
<path d="M1.6 7.4 C3.6 6.4 5.3 6.6 7 7.8 L5.7 13 C4 11.8 2.3 11.7 0.3 12.6Z" fill="url(#wb)"/>
<path d="M7.8 8.3 C10.3 9.5 11.9 9.8 14.3 8.6 L13 14 C10.6 15.2 9 14.9 6.5 13.6Z" fill="url(#wy)"/></svg>
<div class="abs t" style="left:21px;top:739px;font-size:12px;font-weight:bold;color:#000;line-height:14px;letter-spacing:-0.2px">Пуск</div>
<svg width="32" height="31" style="left:71px;top:731px"><defs><radialGradient id="ie" cx="0.45" cy="0.4" r="0.6"><stop offset="0" stop-color="#8fe0ff"/><stop offset="0.5" stop-color="#2a9ae0"/><stop offset="1" stop-color="#0a4a9a"/></radialGradient></defs>
<path d="M16.5 4.3 C24 4.3 29.5 9.5 29.5 16 L29 18 H11.5 C12 21.5 14.5 23.5 17.5 23.5 C20 23.5 22 22.5 23.5 20.5 H28.5 C26.5 25.5 22.5 28 17.2 28 C10.5 28 5 23 5 16.5 C5 10 10.5 5 17 5Z M11.7 13.5 H23 C22.5 11 20 9.2 17.3 9.2 C14.5 9.2 12.3 11 11.7 13.5Z" fill="url(#ie)" stroke="#0a3a70" stroke-width="0.8"/>
<path d="M3 30 C-1 26 6 14 16 8 C25 2.5 31 1 31 4 C31 6 28 9 26 10.5 C28 7 29 4.5 27.5 4 C25 3.3 18 7 12 13 C6 19 3.5 25 5 28 C6 29.5 8 29.5 10 28.5 C7 30.5 4.5 31.2 3 30Z" fill="#f2c234" stroke="#c89a10" stroke-width="0.5"/></svg>
<svg width="33" height="31" style="left:120px;top:733px"><defs><linearGradient id="ex" x1="0" y1="0" x2="0" y2="1"><stop offset="0" stop-color="#fff6c8"/><stop offset="1" stop-color="#eccb70"/></linearGradient><linearGradient id="exb" x1="0" y1="0" x2="1" y2="1"><stop offset="0" stop-color="#d8f2ff"/><stop offset="1" stop-color="#5aaad8"/></linearGradient></defs>
<path d="M1.5 8 V3 Q1.5 1.5 3 1.5 H14 L15.5 4 H30.5 V8Z" fill="#f0d58a" stroke="#c8a850" stroke-width="0.8"/>
<rect x="6" y="2.5" width="8" height="2" fill="#fffbe8"/><rect x="15" y="4.5" width="15" height="2" fill="#fffbe8"/>
<path d="M21 10 V7 Q21 5.5 22.5 5.5 H30.5 V10Z" fill="#f0d58a" stroke="#c8a850" stroke-width="0.8"/><rect x="24" y="6.5" width="6" height="2" fill="#fffbe8"/>
<rect x="4" y="1" width="3.5" height="3" fill="#2a9a3a"/><rect x="12" y="3.5" width="3.5" height="3" fill="#c04a20"/><rect x="19.5" y="5.5" width="3.5" height="3" fill="#3a8aa8"/>
<path d="M1.5 8 H21 V10 H30.5 V27.5 H1.5Z" fill="url(#ex)" stroke="#c8a850" stroke-width="0.8"/>
<path d="M4.5 17 H27.5 V30 H21 V23.5 H11 V30 H4.5Z" fill="url(#exb)" stroke="#4a90c0" stroke-width="0.8"/></svg>
<svg width="30" height="26" style="left:172px;top:736px"><defs><radialGradient id="wm" cx="0.4" cy="0.35" r="0.7"><stop offset="0" stop-color="#ffb060"/><stop offset="1" stop-color="#e06010"/></radialGradient></defs>
<rect x="6" y="1.5" width="20" height="23" fill="#a8d8f4" stroke="#6aa8d0"/><rect x="3" y="1" width="20" height="23.5" fill="#b8e0f8" stroke="#6aa8d0"/><rect x="0.5" y="0.5" width="21" height="23" fill="#c0e2f8" stroke="#6aa8d0"/>
<circle cx="10.5" cy="11.5" r="9" fill="url(#wm)" stroke="#f8c8a0" stroke-width="0.6"/><path d="M7.5 5.5 L16.5 11.5 L7.5 17.5Z" fill="#fff"/></svg>
<div class="abs raised" style="left:212px;top:728px;width:48px;height:38px;"></div>
<svg width="26" height="32" style="left:223px;top:731px"><path d="M1 1 H18 L25 8 V31 H1Z" fill="#fff" stroke="#555" stroke-width="0.8"/><path d="M18 1 V8 H25" fill="#eee" stroke="#777" stroke-width="0.8"/>
<rect x="4.5" y="10" width="17" height="15" fill="#f4f4f4" stroke="#222" stroke-width="0.9"/><rect x="4.5" y="10" width="17" height="2.3" fill="#1a2a7a"/>
<path d="M7 17 l1.6-2 1.6 2-1.6 2z" fill="#d02020"/><path d="M11.5 15 l2.6 1.5-2.6 1.8z" fill="#2040c0"/><path d="M15.5 19 l1.5-3.5 1.5 3.5z" fill="#20a030"/>
<rect x="6" y="21" width="3" height="1" fill="#888"/><rect x="11" y="21" width="3" height="1" fill="#888"/><rect x="16" y="21" width="3" height="1" fill="#888"/></svg>
<svg width="29" height="32" style="left:270px;top:730px"><defs><linearGradient id="tv" x1="0" y1="0" x2="1" y2="1"><stop offset="0" stop-color="#3ab4f8"/><stop offset="1" stop-color="#0a64d0"/></linearGradient></defs>
<path d="M4 1 H25 Q28 1 28 4 V27 Q28 31 24 31 L7 31 Q1 30 1 24 V4 Q1 1 4 1Z" fill="url(#tv)"/>
<circle cx="14" cy="15.5" r="9.5" fill="#f4faff"/><circle cx="14" cy="15.5" r="9.5" fill="none" stroke="#9cd4ff" stroke-width="1"/>
<path d="M6.5 15.5 L10.5 11.5 V14 H17.5 V11.5 L21.5 15.5 L17.5 19.5 V17 H10.5 V19.5Z" fill="#1a78d8"/></svg>
<svg width="32" height="32" style="left:320px;top:730px"><path d="M1 3 Q1 1 3 1 H29 Q31 1 31 3 V29 Q31 31 29 31 H3 Q1 31 1 29Z" fill="#1e46c8" stroke="#1236a0" stroke-width="0.6"/>
<rect x="9" y="1.5" width="14" height="8" fill="#dde"/><rect x="17" y="3" width="3.5" height="5.5" fill="#1e46c8"/>
<rect x="4" y="14" width="24" height="16" fill="#fff"/><rect x="6" y="17" width="20" height="1.2" fill="#c03040"/><rect x="6" y="21" width="20" height="1.2" fill="#c03040"/><rect x="6" y="25" width="20" height="1.2" fill="#c03040"/><rect x="4" y="28.5" width="24" height="1.5" fill="#c03040"/></svg>
<div class="abs" style="left:362px;top:728px;width:47px;height:38px;border:1px solid;border-color:#404040 #fff #fff #404040;box-shadow:inset 1px 1px #808080;background:#fdfdfd"></div>
<svg width="30" height="25" style="left:370px;top:734px" shape-rendering="crispEdges"><defs><linearGradient id="cg" x1="0" y1="0" x2="0.6" y2="1"><stop offset="0" stop-color="#3a3a3a"/><stop offset="0.45" stop-color="#1a1a1a"/><stop offset="0.5" stop-color="#000"/></linearGradient></defs>
<rect x="0" y="0" width="30" height="24" rx="1" fill="#8a8e9a"/><rect x="1" y="1" width="28" height="3" fill="#dfe2ea"/><rect x="22" y="2" width="1" height="1" fill="#333"/><rect x="24" y="2" width="1" height="1" fill="#333"/><rect x="26" y="2" width="1" height="1" fill="#333"/><rect x="1" y="4" width="28" height="19" fill="url(#cg)"/>
<g fill="#fff"><rect x="5" y="6" width="2" height="1"/><rect x="4" y="7" width="1" height="4"/><rect x="5" y="11" width="2" height="1"/><rect x="10" y="8" width="1" height="1"/><rect x="10" y="10" width="1" height="1"/><rect x="13" y="6" width="1" height="3"/><rect x="14" y="9" width="1" height="3"/><rect x="18" y="11" width="8" height="1"/></g></svg>
<div class="abs t" style="left:816px;top:738px;font-size:11px;color:#000;line-height:14px">RU</div>
<div class="abs" style="left:836px;top:734px;width:2px;height:22px;border-left:1px solid #808080;border-right:1px solid #fff"></div>
<div class="abs" style="left:840px;top:728px;width:181px;height:38px;border:1px solid;border-color:#808080 #fff #fff #808080"></div>
<svg width="90" height="24" style="left:845px;top:735px">
<path d="M2 10 L4.5 7.2 L7 10 M2 14.3 L4.5 11.5 L7 14.3" fill="none" stroke="#000" stroke-width="1.7"/>
<rect x="18.5" y="4.5" width="2.6" height="15" rx="1.2" fill="#fff" stroke="#555" stroke-width="0.9"/>
<path d="M21.1 5.5 L27.3 5.5 L27.5 8.2 L33.8 8.2 Q34.2 11.5 30.5 13.5 L27.3 13.5 L27.3 12.5 L21.1 12.5Z" fill="#f6f6f6" stroke="#555" stroke-width="0.9"/>
<rect x="46.2" y="5.6" width="11.2" height="10.6" fill="#fff" stroke="#555" stroke-width="0.9"/><rect x="48" y="7.3" width="7.8" height="7.2" fill="#8a8a8a"/>
<rect x="47.2" y="17" width="8.4" height="2.6" fill="#fff" stroke="#555" stroke-width="0.9"/>
<path d="M42.8 4 V9 Q42.8 11 45 11 Q47.2 11 47.2 9 V4 M45 11 V19.5" fill="none" stroke="#444" stroke-width="2.4"/>
<path d="M42.8 4.3 V9 Q42.8 11 45 11 Q47.2 11 47.2 9 V4.3 M45 11 V19.2" fill="none" stroke="#fff" stroke-width="0.9"/>
<rect x="66.3" y="8.6" width="3" height="7.4" fill="#fff" stroke="#555" stroke-width="0.9"/>
<path d="M69.3 8.6 L72.6 4.3 V20.2 L69.3 16Z" fill="#fff" stroke="#555" stroke-width="0.9"/>
<path d="M74.8 10.3 Q76.3 12.3 74.8 14.4 M77 7.8 Q79.8 12.3 77 16.8 M79.3 5.5 Q83.2 12.3 79.3 19.2" fill="none" stroke="#555" stroke-width="1.3"/>
</svg>
<div class="abs t" style="left:939px;top:732px;width:60px;font-size:11.5px;color:#000;line-height:14px;text-align:center">11:38</div>
<div class="abs t" style="left:938px;top:748px;width:60px;font-size:11px;color:#000;line-height:14px;text-align:center">06.06.2017</div>
<div class="abs" style="left:1005px;top:741px;width:14px;height:12px;background:linear-gradient(#5aa0f0,#1a5ac8);border:1px solid #8ab8e8"><div class="abs" style="left:0;bottom:0;width:12px;height:2px;background:#222"></div></div>
</body></html>
